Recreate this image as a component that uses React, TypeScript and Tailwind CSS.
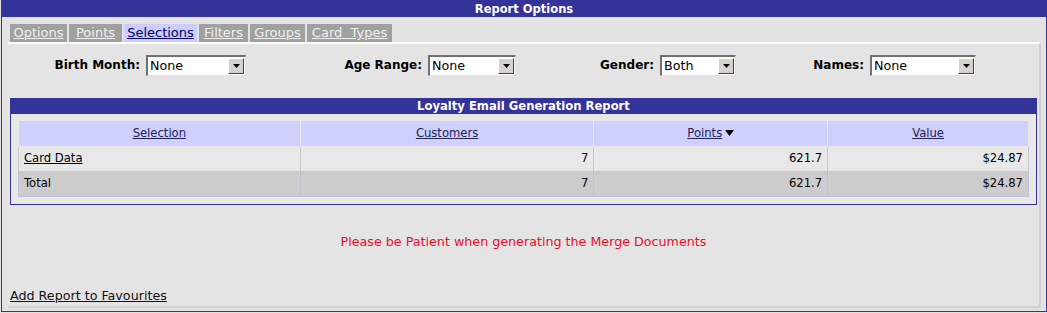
import React from "react";

const font = { fontFamily: '"DejaVu Sans", Verdana, sans-serif' };

function Select({ value, width }: { value: string; width: number }) {
  return (
    <div
      className="flex h-[21px] items-stretch bg-white border-t-2 border-l-2 border-t-[#707070] border-l-[#707070] border-r border-b border-r-[#e0e0e0] border-b-[#e0e0e0]"
      style={{ width }}
    >
      <div className="flex-1 pl-[2px] text-[12.7px] font-normal leading-[18px] text-black">{value}</div>
      <div className="m-[1px] w-[16px] bg-[#d6d3ce] border-t border-l border-t-white border-l-white border-r border-b border-r-[#404040] border-b-[#404040] flex items-center justify-center">
        <svg width="7" height="4" viewBox="0 0 7 4">
          <path d="M0 0h7L3.5 4z" fill="#000" />
        </svg>
      </div>
    </div>
  );
}

function Tab({ label, active, w }: { label: string; active?: boolean; w: string }) {
  return (
    <div
      className={
        "h-[18px] text-center text-[13px] leading-[18px] underline whitespace-pre " +
        w +
        " " +
        (active ? "bg-[#ccccff] text-[#000066]" : "bg-[#a0a0a0] text-[#f0f0f0]")
      }
    >
      {label}
    </div>
  );
}

export default function App() {
  return (
    <div className="w-[1047px] h-[313px] bg-[#e3e3e3]" style={font}>
      <div className="w-[1046px] h-[312px] ml-[1px] border border-[#333399] flex flex-col">
        <div className="h-[16px] bg-[#333399] text-white font-bold text-[11.5px] leading-[16px] text-center">
          Report Options
        </div>
        <div className="flex gap-[2px] pl-[8px] mt-[7px]">
          <Tab label="Options" w="w-[57px]" />
          <Tab label="Points" w="w-[53px]" />
          <Tab label="Selections" w="w-[73px]" active />
          <Tab label="Filters" w="w-[49px]" />
          <Tab label="Groups" w="w-[55px]" />
          <Tab label={"Card\u00a0\u00a0Types"} w="w-[85px]" />
        </div>
        <div className="ml-[6px] w-[1033px] h-[266px] bg-[#e4e4e4] border-t-2 border-t-white border-r-2 border-r-[#d0d0d0] border-b-2 border-b-[#d0d0d0] flex flex-col">
          <div className="flex items-center h-[22px] mt-[10px] text-[12px] font-bold text-black">
            <span className="w-[132px] text-right">Birth Month:</span>
            <div className="ml-[6px]"><Select value="None" width={100} /></div>
            <span className="w-[176px] text-right">Age Range:</span>
            <div className="ml-[6px]"><Select value="None" width={88} /></div>
            <span className="w-[138px] text-right">Gender:</span>
            <div className="ml-[6px]"><Select value="Both" width={76} /></div>
            <span className="w-[128px] text-right">Names:</span>
            <div className="ml-[6px]"><Select value="None" width={106} /></div>
          </div>
          <div className="ml-[2px] mt-[22px] w-[1027px] border border-[#333399] bg-[#e8e8e8]">
            <div className="h-[15px] bg-[#333399] text-white font-bold text-[11.6px] leading-[15px] text-center">
              Loyalty Email Generation Report
            </div>
            <div className="px-[7px] pt-[6px] pb-[7px]">
              <table className="w-[1011px] border-collapse text-[11.6px] text-black">
                <colgroup>
                  <col style={{ width: 282 }} />
                  <col style={{ width: 294 }} />
                  <col style={{ width: 234 }} />
                  <col style={{ width: 201 }} />
                </colgroup>
                <thead>
                  <tr className="h-[26px] bg-[#d0d0ff]">
                    <th className="font-normal border border-[#e8e8e8] text-center"><span className="underline text-[#222255]">Selection</span></th>
                    <th className="font-normal border border-[#e8e8e8] text-center"><span className="underline text-[#222255]">Customers</span></th>
                    <th className="font-normal border border-[#e8e8e8] text-center">
                      <span className="underline text-[#222255]">Points</span>
                      <svg className="inline-block ml-[3px] align-middle" width="9" height="6" viewBox="0 0 9 6"><path d="M0 0h9L4.5 6z" fill="#000" /></svg>
                    </th>
                    <th className="font-normal border border-[#e8e8e8] text-center"><span className="underline text-[#222255]">Value</span></th>
                  </tr>
                </thead>
                <tbody>
                  <tr className="h-[25px] bg-[#e8e8e8]">
                    <td className="border border-[#c8c8c8] px-[5px]"><span className="underline">Card Data</span></td>
                    <td className="border border-[#c8c8c8] px-[5px] text-right">7</td>
                    <td className="border border-[#c8c8c8] px-[5px] text-right">621.7</td>
                    <td className="border border-[#c8c8c8] px-[5px] text-right">$24.87</td>
                  </tr>
                  <tr className="h-[25px] bg-[#cccccc]">
                    <td className="border border-[#c0c0d8] px-[5px]">Total</td>
                    <td className="border border-[#c0c0d8] px-[5px] text-right">7</td>
                    <td className="border border-[#c0c0d8] px-[5px] text-right">621.7</td>
                    <td className="border border-[#c0c0d8] px-[5px] text-right">$24.87</td>
                  </tr>
                </tbody>
              </table>
            </div>
          </div>
          <div className="mt-[27px] text-center text-[12.7px] text-[#e8102a]">
            Please be Patient when generating the Merge Documents
          </div>
          <div className="mt-auto ml-[2px] mb-[1px] text-[12.7px] underline text-[#111]">
            Add Report to Favourites
          </div>
        </div>
      </div>
    </div>
  );
}
